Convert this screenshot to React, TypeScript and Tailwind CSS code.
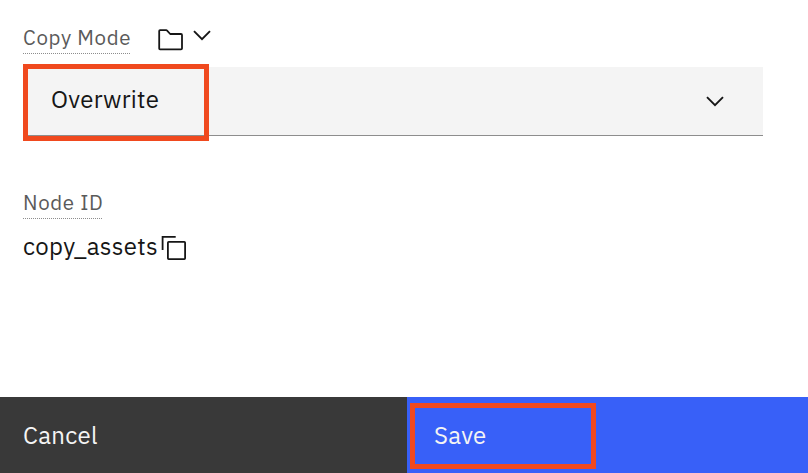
import React from "react";

function FieldLabel({ children, className }: { children: string; className: string }) {
  return (
    <span className={`block h-[29px] whitespace-nowrap border-b border-dotted border-[#8d8d8d] text-[20.5px] leading-[26px] text-[#5a5a5a] ${className}`}>
      {children}
    </span>
  );
}

function Chevron({ className }: { className: string }) {
  return (
    <svg className={className} width="18" height="11" viewBox="0 0 18 11" fill="none" stroke="#161616" strokeWidth="1.9">
      <path d="M1 1.2 9 9.2 17 1.2" />
    </svg>
  );
}

export default function App() {
  return (
    <div className="flex h-[473px] w-[808px] flex-col overflow-hidden bg-white font-['IBM_Plex_Sans','Roboto',sans-serif] text-[#161616] antialiased">
      <main className="flex-1 pl-[23px] pt-[25px]">
        <div className="flex h-[42px] items-start">
          <FieldLabel className="w-[107px] tracking-[0.65px]">Copy Mode</FieldLabel>
          <svg className="ml-7 mt-1" width="26" height="22" viewBox="0 0 26 22" fill="none" stroke="#161616" strokeWidth="1.8" strokeLinejoin="round">
            <path d="M2 1.2h6.2q.5 0 .9.4L12.2 5H23q1 0 1 1v13.5q0 .8-1 .8H2q-.8 0-.8-.8V2q0-.8.8-.8Z" />
          </svg>
          <Chevron className="ml-[9px] mt-[5px]" />
        </div>

        <div className="relative flex h-[69px] w-[740px] items-center justify-between border-b border-[#8d8d8d] bg-[#f4f4f4] pl-7 pr-[39px]">
          <span className="pb-[5px] text-2xl tracking-[0.3px]">Overwrite</span>
          <Chevron className="mt-[1px]" />
          <div className="absolute -top-[3px] left-0 h-[77px] w-[186px] border-[5px] border-[#f0491e]" />
        </div>

        <div className="pt-[54px]">
          <FieldLabel className="w-[79px] tracking-[0.65px]">Node ID</FieldLabel>
          <div className="flex items-start pt-[11px]">
            <span className="w-[138px] whitespace-nowrap text-2xl tracking-[0.32px]">copy_assets</span>
            <svg className="mt-[5px]" width="26" height="26" viewBox="0 0 26 26" fill="none" stroke="#161616" strokeWidth="1.8">
              <path d="M1.6 15V1.9h13.1" />
              <rect x="6.9" y="6.9" width="17.2" height="17.2" rx="0.8" />
            </svg>
          </div>
        </div>
      </main>

      <footer className="flex h-[76px] text-2xl text-[#f4f4f4]">
        <button className="flex w-[407px] items-center bg-[#393939] pl-[23px] tracking-[0.3px]">Cancel</button>
        <button className="relative flex flex-1 items-center bg-[#3860f8] pl-[27px] tracking-[0.3px]">
          Save
          <span className="absolute left-[3px] top-1.5 h-[66px] w-[186px] border-[5px] border-[#f0491e]" />
        </button>
      </footer>
    </div>
  );
}
